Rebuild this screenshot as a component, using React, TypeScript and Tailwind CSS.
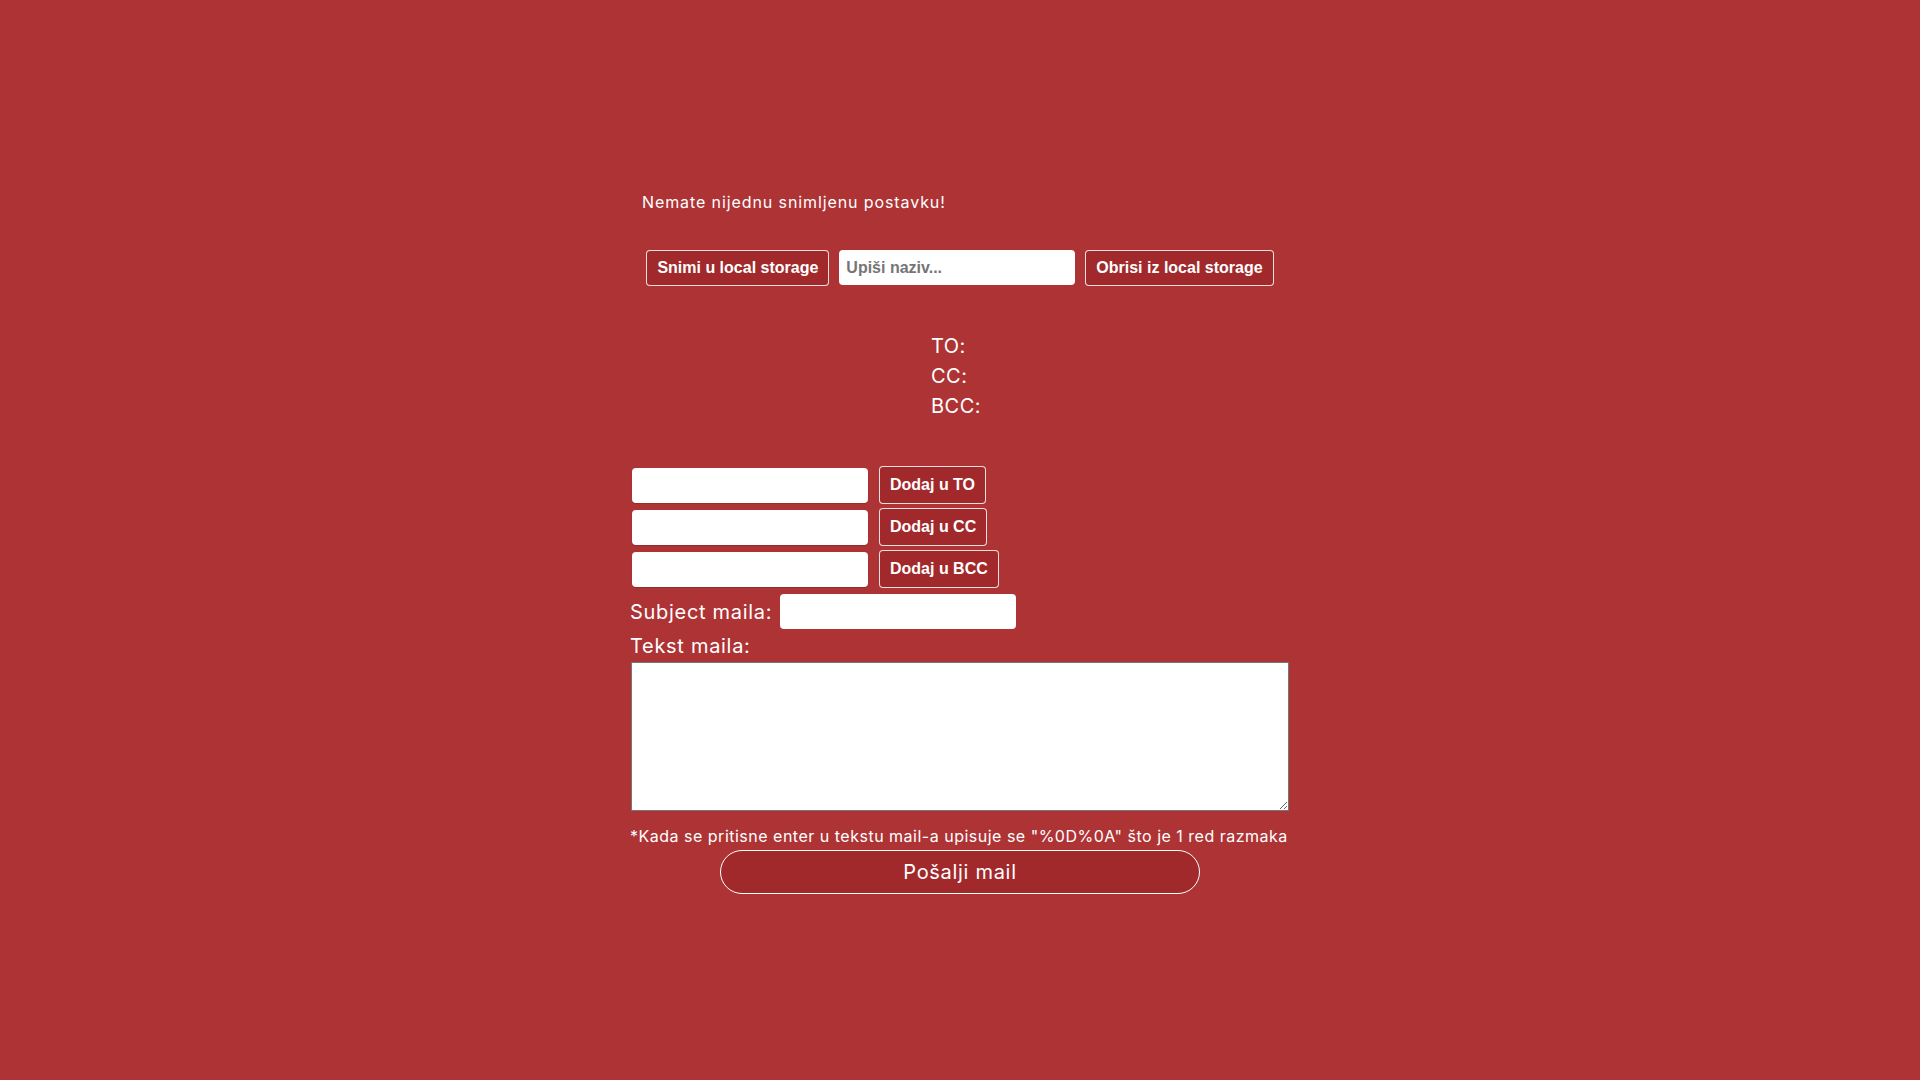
const sans = "font-['Inter',sans-serif]";
const btn =
  "rounded-[4px] border border-white/85 bg-[#a1292c] px-[10px] font-['Liberation_Sans',Arial,sans-serif] text-[16px] font-bold leading-[18px] text-white";

export default function App() {
  return (
    <div className={`min-h-screen bg-[#ae3335] text-white ${sans}`}>
      <div className="mx-auto w-[660px] pt-[190px]">
        {/* Saved presets */}
        <p className="pl-3 text-[16px] leading-6 tracking-[0.9px]">Nemate nijednu snimljenu postavku!</p>
        <div className="mt-[36px] flex justify-center gap-2.5">
          <button className={`${btn} py-2`}>Snimi u local storage</button>
          <input
            className="h-[35px] w-[236px] rounded-[4px] bg-white px-[7px] font-['Liberation_Sans',Arial,sans-serif] text-[16px] font-bold text-[#333] placeholder:text-[#757575] outline-none"
            placeholder="Upiši naziv..."
          />
          <button className={`${btn} py-2`}>Obrisi iz local storage</button>
        </div>

        {/* Recipients */}
        <div className="mt-[45px] pl-[301px] text-[20px] leading-[30px] tracking-[0.5px]">
          <div>TO:</div>
          <div>CC:</div>
          <div>BCC:</div>
        </div>

        {/* Add recipient rows */}
        <div className="mt-[45px] flex flex-col gap-[4px] pl-[2px]">
          {["TO", "CC", "BCC"].map((k) => (
            <div key={k} className="flex h-[38px] items-center gap-[11px]">
              <input className="h-[35px] w-[236px] rounded-[4px] bg-white px-2 text-black outline-none shadow-[0_1px_1px_rgba(0,0,0,0.15)]" />
              <button className={`${btn} h-[38px] px-[9px]`}>Dodaj u {k}</button>
            </div>
          ))}
        </div>

        <div className="mt-[6px] flex items-center gap-2">
          <label className="text-[20px] leading-[30px] tracking-[0.7px]">Subject maila:</label>
          <input className="h-[35px] w-[236px] rounded-[4px] bg-white px-2 text-black outline-none" />
        </div>

        <div className="mt-[2px] text-[20px] leading-[30px] tracking-[0.7px]">Tekst maila:</div>
        <textarea className="ml-[1px] mt-[1px] block h-[149px] w-[658px] border border-[#767676] bg-white p-1 text-black outline-none" />

        <p className="mt-[15px] text-[16px] leading-5 tracking-[0.5px]">
          *Kada se pritisne enter u tekstu mail-a upisuje se "%0D%0A" što je 1 red razmaka
        </p>
        <div className="flex justify-center">
          <button className="mt-[4px] h-[44px] w-[480px] rounded-full border border-white bg-[#a1292c] text-[20px] tracking-[0.7px] text-white">
            Pošalji mail
          </button>
        </div>
      </div>
    </div>
  );
}
